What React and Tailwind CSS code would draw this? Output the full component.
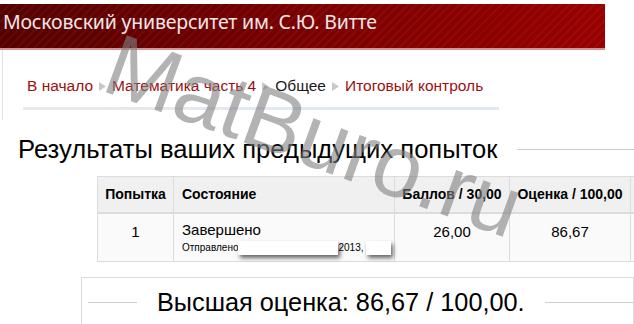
import React from 'react';

// Результаты теста — воспроизведение страницы Moodle
const crumbs = [
  { text: 'В начало', link: true },
  { text: 'Математика часть 4', link: true },
  { text: 'Общее', link: false },
  { text: 'Итоговый контроль', link: true },
];

function Sep() {
  return (
    <svg className="mx-[5px] inline-block" width="9" height="10" viewBox="0 0 9 10">
      <path d="M1 1 L8 5.5 L1 10 Z" fill="#c8c8c8" />
    </svg>
  );
}

function Redact({ w }) {
  return (
    <span className="inline-block h-[14px] bg-white align-middle shadow-[2px_3px_4px_rgba(0,0,0,0.6)]" style={{ width: w }} />
  );
}

export default function App() {
  return (
    <div className="relative w-[634px] h-[324px] overflow-hidden bg-white font-['Liberation_Sans',Arial,sans-serif] text-black">
      {/* Шапка */}
      <div className="pt-[4px] w-[605px]">
        <div className="h-[44px] bg-gradient-to-r from-[#560000] via-[#7a0000] to-[#990000] relative">
          <div className="absolute inset-0 bg-[repeating-linear-gradient(135deg,rgba(255,255,255,0.04)_0px,rgba(255,255,255,0.04)_2px,transparent_2px,transparent_6px)]" />
          <div className="relative pl-[3px] pt-[4px] font-['Noto_Sans','Open_Sans',sans-serif] text-[19.5px] tracking-[-0.2px] leading-[28px] text-[#f1e6e6]">
            Московский университет им. С.Ю. Витте
          </div>
        </div>
        <div className="h-[2px] bg-[#d49494]" />
      </div>

      {/* Навигация */}
      <div className="ml-[2px] border-l border-[#e2e2e2] h-[70px] pt-[27px]">
        <div className="pl-[24px] text-[15.5px] leading-[18px] flex items-center">
          {crumbs.map((c, i) => (
            <React.Fragment key={i}>
              {i > 0 && <Sep />}
              <span className={c.link ? 'text-[#9b0f0f]' : 'text-[#1a1a1a]'}>{c.text}</span>
            </React.Fragment>
          ))}
        </div>
        <div className="ml-[20px] mt-[12px] w-[476px] h-[3px] bg-gradient-to-r from-[#e9e9e9] to-[#dce9f6]" />
      </div>

      {/* Заголовок */}
      <div className="flex items-center mt-[14px] pl-[18px]">
        <h2 className="text-[25.6px] leading-[30px] font-normal whitespace-nowrap">Результаты ваших предыдущих попыток</h2>
        <div className="ml-[20px] flex-1 h-px bg-[#cfcfcf]" />
      </div>

      {/* Таблица */}
      <table className="ml-[97px] mt-[12px] border-collapse text-[14px] w-[600px] table-fixed">
        <colgroup>
          <col className="w-[76px]" />
          <col className="w-[221px]" />
          <col className="w-[115px]" />
          <col className="w-[121px]" />
          <col className="w-[67px]" />
        </colgroup>
        <thead>
          <tr className="bg-[#f0f0f0] h-[36px]">
            <th className="border border-[#dcdcdc] border-b-2 font-bold text-center px-[4px] whitespace-nowrap">Попытка</th>
            <th className="border border-[#dcdcdc] border-b-2 font-bold text-left px-[8px]">Состояние</th>
            <th className="border border-[#dcdcdc] border-b-2 font-bold text-center px-[4px] whitespace-nowrap">Баллов / 30,00</th>
            <th className="border border-[#dcdcdc] border-b-2 font-bold text-center px-[4px] whitespace-nowrap">Оценка / 100,00</th>
            <th className="border border-[#dcdcdc] border-b-2" />
          </tr>
        </thead>
        <tbody>
          <tr className="bg-[#fafafa] h-[49px] align-top text-[15px]">
            <td className="border border-[#dcdcdc] text-center pt-[7px]">1</td>
            <td className="border border-[#dcdcdc] px-[8px] pt-[7px]">
              <div className="leading-[17px]">Завершено</div>
              <div className="text-[10px] leading-[14px] mt-[3px] whitespace-nowrap">
                Отправлено<Redact w={100} />2013, <Redact w={25} />
              </div>
            </td>
            <td className="border border-[#dcdcdc] text-center pt-[7px]">26,00</td>
            <td className="border border-[#dcdcdc] text-center pt-[7px]">86,67</td>
            <td className="border border-[#dcdcdc]" />
          </tr>
        </tbody>
      </table>

      {/* Высшая оценка */}
      <div className="ml-[81px] mt-[15px] border border-[#dcdcdc] h-[60px] pt-[8px] pl-[6px] flex items-start">
        <div className="flex items-center w-full">
          <div className="w-[49px] h-px bg-[#cfcfcf]" />
          <div className="px-[20px] text-[25.3px] leading-[32px] whitespace-nowrap">Высшая оценка: 86,67 / 100,00.</div>
          <div className="flex-1 h-px bg-[#cfcfcf]" />
        </div>
      </div>

      {/* Водяной знак */}
      <div className="pointer-events-none absolute left-[314px] top-[136px] -translate-x-1/2 -translate-y-1/2 rotate-[20deg] text-[88px] leading-none whitespace-nowrap text-[#808080]/60 font-['Liberation_Sans',Arial,sans-serif]">
        MatBuro.ru
      </div>
    </div>
  );
}
